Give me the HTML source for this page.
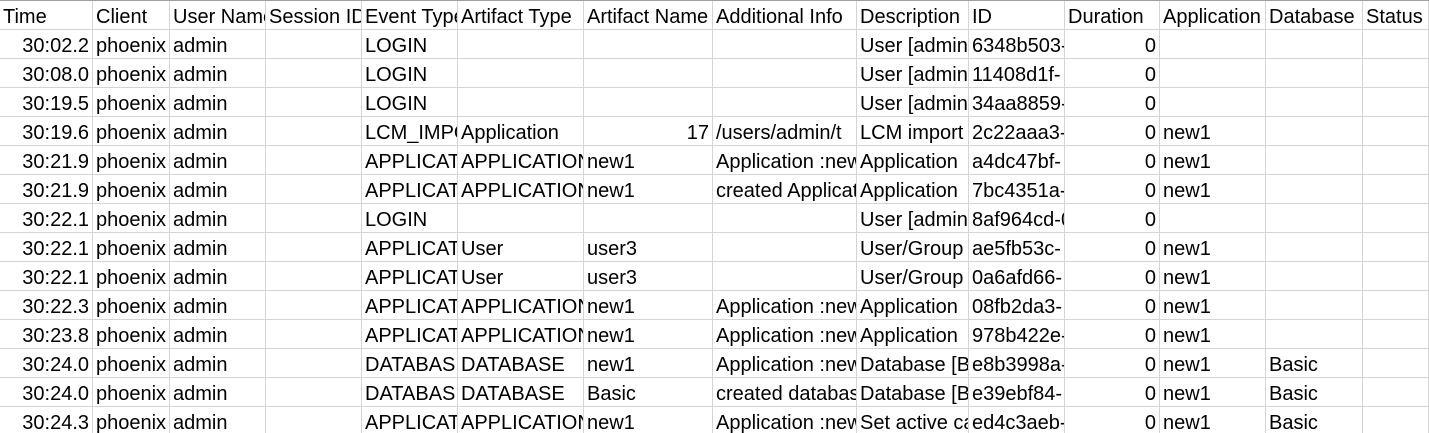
<!DOCTYPE html>
<html><head><meta charset="utf-8"><style>
html,body{margin:0;padding:0;background:#fff;width:1429px;height:433px;overflow:hidden}
body{font-family:"Liberation Sans",Arial,sans-serif;font-size:20px;color:#000;border-top:1px solid #a0a0a0;box-sizing:border-box}
.r{display:flex;height:29px}
.c{box-sizing:border-box;height:29px;border-right:1px solid #d4d4d4;border-bottom:1px solid #d4d4d4;white-space:nowrap;overflow:hidden;padding:0 1px 0 3px;line-height:33px}
.n{text-align:right;padding-right:3px}
.c:nth-child(1){width:93px}.c:nth-child(2){width:77px}.c:nth-child(3){width:96px}.c:nth-child(4){width:96px}.c:nth-child(5){width:96px}.c:nth-child(6){width:126px}.c:nth-child(7){width:129px}.c:nth-child(8){width:144px}.c:nth-child(9){width:112px}.c:nth-child(10){width:96px}.c:nth-child(11){width:95px}.c:nth-child(12){width:106px}.c:nth-child(13){width:97px}.c:nth-child(14){width:66px}
</style></head><body>
<div class="r"><div class="c">Time</div><div class="c">Client</div><div class="c">User Name</div><div class="c">Session ID</div><div class="c">Event Type</div><div class="c">Artifact Type</div><div class="c">Artifact Name</div><div class="c">Additional Info</div><div class="c">Description</div><div class="c">ID</div><div class="c">Duration</div><div class="c">Application</div><div class="c">Database</div><div class="c">Status</div></div>
<div class="r"><div class="c n">30:02.2</div><div class="c">phoenix</div><div class="c">admin</div><div class="c"></div><div class="c">LOGIN</div><div class="c"></div><div class="c"></div><div class="c"></div><div class="c">User [admin]</div><div class="c">6348b503-</div><div class="c n">0</div><div class="c"></div><div class="c"></div><div class="c"></div></div>
<div class="r"><div class="c n">30:08.0</div><div class="c">phoenix</div><div class="c">admin</div><div class="c"></div><div class="c">LOGIN</div><div class="c"></div><div class="c"></div><div class="c"></div><div class="c">User [admin]</div><div class="c">11408d1f-</div><div class="c n">0</div><div class="c"></div><div class="c"></div><div class="c"></div></div>
<div class="r"><div class="c n">30:19.5</div><div class="c">phoenix</div><div class="c">admin</div><div class="c"></div><div class="c">LOGIN</div><div class="c"></div><div class="c"></div><div class="c"></div><div class="c">User [admin]</div><div class="c">34aa8859-</div><div class="c n">0</div><div class="c"></div><div class="c"></div><div class="c"></div></div>
<div class="r"><div class="c n">30:19.6</div><div class="c">phoenix</div><div class="c">admin</div><div class="c"></div><div class="c">LCM_IMPORT</div><div class="c">Application</div><div class="c n">17</div><div class="c">/users/admin/t</div><div class="c">LCM import</div><div class="c">2c22aaa3-</div><div class="c n">0</div><div class="c">new1</div><div class="c"></div><div class="c"></div></div>
<div class="r"><div class="c n">30:21.9</div><div class="c">phoenix</div><div class="c">admin</div><div class="c"></div><div class="c">APPLICATION</div><div class="c">APPLICATION</div><div class="c">new1</div><div class="c">Application :new1</div><div class="c">Application</div><div class="c">a4dc47bf-</div><div class="c n">0</div><div class="c">new1</div><div class="c"></div><div class="c"></div></div>
<div class="r"><div class="c n">30:21.9</div><div class="c">phoenix</div><div class="c">admin</div><div class="c"></div><div class="c">APPLICATION</div><div class="c">APPLICATION</div><div class="c">new1</div><div class="c">created Application</div><div class="c">Application</div><div class="c">7bc4351a-</div><div class="c n">0</div><div class="c">new1</div><div class="c"></div><div class="c"></div></div>
<div class="r"><div class="c n">30:22.1</div><div class="c">phoenix</div><div class="c">admin</div><div class="c"></div><div class="c">LOGIN</div><div class="c"></div><div class="c"></div><div class="c"></div><div class="c">User [admin]</div><div class="c">8af964cd-0</div><div class="c n">0</div><div class="c"></div><div class="c"></div><div class="c"></div></div>
<div class="r"><div class="c n">30:22.1</div><div class="c">phoenix</div><div class="c">admin</div><div class="c"></div><div class="c">APPLICATION</div><div class="c">User</div><div class="c">user3</div><div class="c"></div><div class="c">User/Group</div><div class="c">ae5fb53c-</div><div class="c n">0</div><div class="c">new1</div><div class="c"></div><div class="c"></div></div>
<div class="r"><div class="c n">30:22.1</div><div class="c">phoenix</div><div class="c">admin</div><div class="c"></div><div class="c">APPLICATION</div><div class="c">User</div><div class="c">user3</div><div class="c"></div><div class="c">User/Group</div><div class="c">0a6afd66-</div><div class="c n">0</div><div class="c">new1</div><div class="c"></div><div class="c"></div></div>
<div class="r"><div class="c n">30:22.3</div><div class="c">phoenix</div><div class="c">admin</div><div class="c"></div><div class="c">APPLICATION</div><div class="c">APPLICATION</div><div class="c">new1</div><div class="c">Application :new1</div><div class="c">Application</div><div class="c">08fb2da3-</div><div class="c n">0</div><div class="c">new1</div><div class="c"></div><div class="c"></div></div>
<div class="r"><div class="c n">30:23.8</div><div class="c">phoenix</div><div class="c">admin</div><div class="c"></div><div class="c">APPLICATION</div><div class="c">APPLICATION</div><div class="c">new1</div><div class="c">Application :new1</div><div class="c">Application</div><div class="c">978b422e-</div><div class="c n">0</div><div class="c">new1</div><div class="c"></div><div class="c"></div></div>
<div class="r"><div class="c n">30:24.0</div><div class="c">phoenix</div><div class="c">admin</div><div class="c"></div><div class="c">DATABASE</div><div class="c">DATABASE</div><div class="c">new1</div><div class="c">Application :new1</div><div class="c">Database [B</div><div class="c">e8b3998a-</div><div class="c n">0</div><div class="c">new1</div><div class="c">Basic</div><div class="c"></div></div>
<div class="r"><div class="c n">30:24.0</div><div class="c">phoenix</div><div class="c">admin</div><div class="c"></div><div class="c">DATABASE</div><div class="c">DATABASE</div><div class="c">Basic</div><div class="c">created database</div><div class="c">Database [B</div><div class="c">e39ebf84-</div><div class="c n">0</div><div class="c">new1</div><div class="c">Basic</div><div class="c"></div></div>
<div class="r"><div class="c n">30:24.3</div><div class="c">phoenix</div><div class="c">admin</div><div class="c"></div><div class="c">APPLICATION</div><div class="c">APPLICATION</div><div class="c">new1</div><div class="c">Application :new1</div><div class="c">Set active ca</div><div class="c">ed4c3aeb-</div><div class="c n">0</div><div class="c">new1</div><div class="c">Basic</div><div class="c"></div></div>
</body></html>
